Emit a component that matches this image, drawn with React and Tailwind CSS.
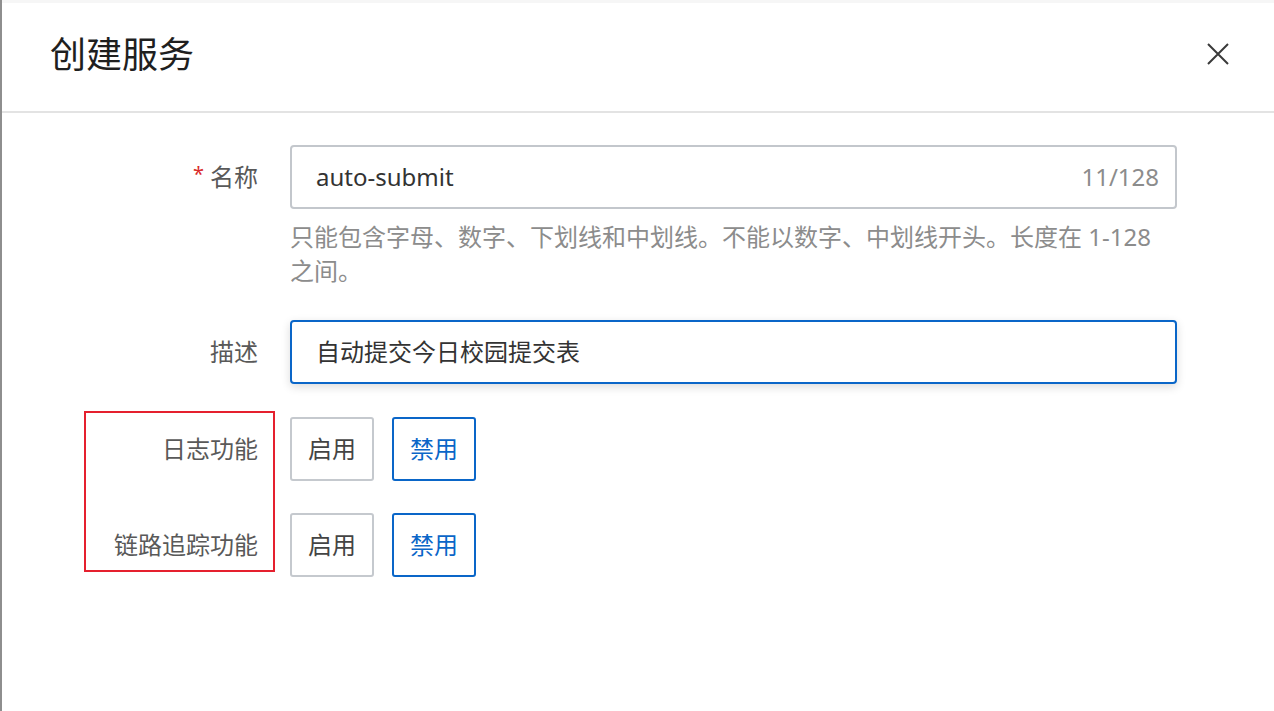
import React from "react";

const font = { fontFamily: '"Noto Sans", "Noto Sans CJK SC", sans-serif' };

function Row({ label, required, children, align = "center" }) {
  return (
    <div className={`flex gap-[32px] ${align === "center" ? "items-center" : "items-start"}`}>
      <div className="w-[258px] shrink-0 flex justify-end items-center h-[64px] text-[24px] text-[#595959]">
        {required && <span className="text-[#d92b2b] text-[20px] mr-[6px] -mt-[6px]">*</span>}
        {label}
      </div>
      <div className="w-[887px] shrink-0">{children}</div>
    </div>
  );
}

function Toggle() {
  return (
    <div className="flex gap-[18px]">
      <button className="w-[84px] h-[64px] rounded-[3px] border-2 border-[#c5c9ce] bg-white text-[24px] text-[#444]">
        启用
      </button>
      <button className="w-[84px] h-[64px] rounded-[3px] border-2 border-[#0a66c8] bg-white text-[24px] text-[#0a66c8]">
        禁用
      </button>
    </div>
  );
}

export default function App() {
  return (
    <div className="flex w-full h-[711px] bg-white overflow-hidden" style={font}>
      <div className="w-[2px] shrink-0 bg-[#8e8e8e]" />
      <div className="flex-1 flex flex-col border-t-[3px] border-[#f6f6f6]">
        {/* Header */}
        <div className="h-[110px] shrink-0 flex items-center justify-between pl-[48px] pr-[44px] border-b-2 border-[#e3e3e3]">
          <h1 className="text-[36px] text-[#1f1f1f] font-normal -mt-[4px]">创建服务</h1>
          <button className="w-[24px] h-[24px] flex items-center justify-center text-[#3a3a3a] -mt-[6px]">
            <svg width="22" height="22" viewBox="0 0 22 22" fill="none" stroke="currentColor" strokeWidth="2">
              <path d="M1 1L21 21M21 1L1 21" />
            </svg>
          </button>
        </div>

        {/* Form */}
        <div className="flex flex-col pt-[32px] -ml-[2px]">
          <Row label="名称" required align="top">
            <div className="h-[64px] rounded-[4px] border-2 border-[#c3c7cc] flex items-center justify-between pl-[24px] pr-[16px]">
              <span className="text-[24px] text-[#333]">auto-submit</span>
              <span className="text-[24px] text-[#8c8c8c]">11/128</span>
            </div>
            <p className="mt-[11px] text-[24px] leading-[34px] text-[#8c8c8c]">
              只能包含字母、数字、下划线和中划线。不能以数字、中划线开头。长度在 1-128
              <br />
              之间。
            </p>
          </Row>

          <div className="mt-[32px]">
            <Row label="描述">
              <div className="h-[64px] rounded-[4px] border-2 border-[#0a66c8] flex items-center pl-[24px] shadow-[0_3px_10px_rgba(0,0,0,0.14)]">
                <span className="text-[24px] text-[#333]">自动提交今日校园提交表</span>
              </div>
            </Row>
          </div>

          <div className="relative mt-[33px] flex flex-col gap-[32px]">
            <Row label="日志功能">
              <Toggle />
            </Row>
            <Row label="链路追踪功能">
              <Toggle />
            </Row>
            <div className="absolute left-[84px] top-[-6px] w-[191px] h-[161px] border-2 border-[#e5202e] pointer-events-none" />
          </div>
        </div>
      </div>
    </div>
  );
}
